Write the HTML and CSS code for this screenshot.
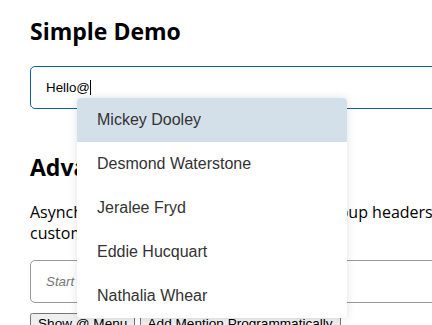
FILE: index.html
```html
<!DOCTYPE html>
<html lang="en">
<head>
    <meta charset="UTF-8">
    <meta name="viewport" content="width=device-width, initial-scale=1.0">
    <title>Mentions Demo</title>
    <link rel="stylesheet" href="styles.css">
</head>
<body>
    <div class="page">
        <h2>Simple Demo</h2>
        <div class="field">
            <div class="mention-input focused">Hello@<span class="caret"></span></div>
            <ul class="menu">
                <li class="menu-item active">Mickey Dooley</li>
                <li class="menu-item">Desmond Waterstone</li>
                <li class="menu-item">Jeralee Fryd</li>
                <li class="menu-item">Eddie Hucquart</li>
                <li class="menu-item">Nathalia Whear</li>
            </ul>
        </div>

        <h2>Advanced Demo</h2>
        <p class="intro">Asynchronous lookup with loading and group headers, customized item templates and more.</p>
        <div class="field">
            <div class="mention-input"><span class="placeholder">Start typing and use @ to mention someone</span></div>
        </div>
        <div class="actions">
            <button>Show @ Menu</button>
            <button>Add Mention Programmatically</button>
        </div>
    </div>
</body>
</html>
```

FILE: styles.css
```css
body {
    margin: 0;
    font-family: 'Open Sans', 'Noto Sans', sans-serif;
    color: #000;
    background: #fff;
    overflow: hidden;
}
.page {
    width: 470px;
    padding: 15px 30px 0;
}
h2 {
    font-size: 23px;
    line-height: 32px;
    font-weight: 700;
    margin: 0 0 19px;
}
.field {
    position: relative;
}
.mention-input {
    height: 41px;
    line-height: 41px;
    padding: 0 15px;
    border: 1px solid #999;
    border-radius: 5px;
    font-family: 'Liberation Sans', Arial, sans-serif;
    font-size: 13.333px;
}
.mention-input.focused {
    border-color: #0b5fae;
}
.caret {
    display: inline-block;
    width: 0;
    height: 15px;
    border-left: 1px solid #000;
    vertical-align: -3px;
}
.placeholder {
    color: #757575;
    font-style: italic;
}
.menu {
    position: absolute;
    top: 32px;
    left: 47px;
    width: 270px;
    margin: 0;
    padding: 0;
    list-style: none;
    background: #fff;
    border-radius: 4px;
    box-shadow: 0 0 8px rgba(0, 0, 0, 0.12);
    overflow: hidden;
    z-index: 2;
}
.menu-item {
    height: 44px;
    line-height: 44px;
    padding: 0 20px;
    font-family: 'Liberation Sans', Arial, sans-serif;
    font-size: 16px;
    color: #333;
}
.menu-item.active {
    background-color: #d3e0ea;
}
.field + h2 {
    margin-top: 42px;
}
.intro {
    font-size: 16px;
    line-height: 21px;
    margin: 0 0 16px;
}
.actions {
    margin-top: 8px;
}
button {
    font-size: 13.6px;
}
```
